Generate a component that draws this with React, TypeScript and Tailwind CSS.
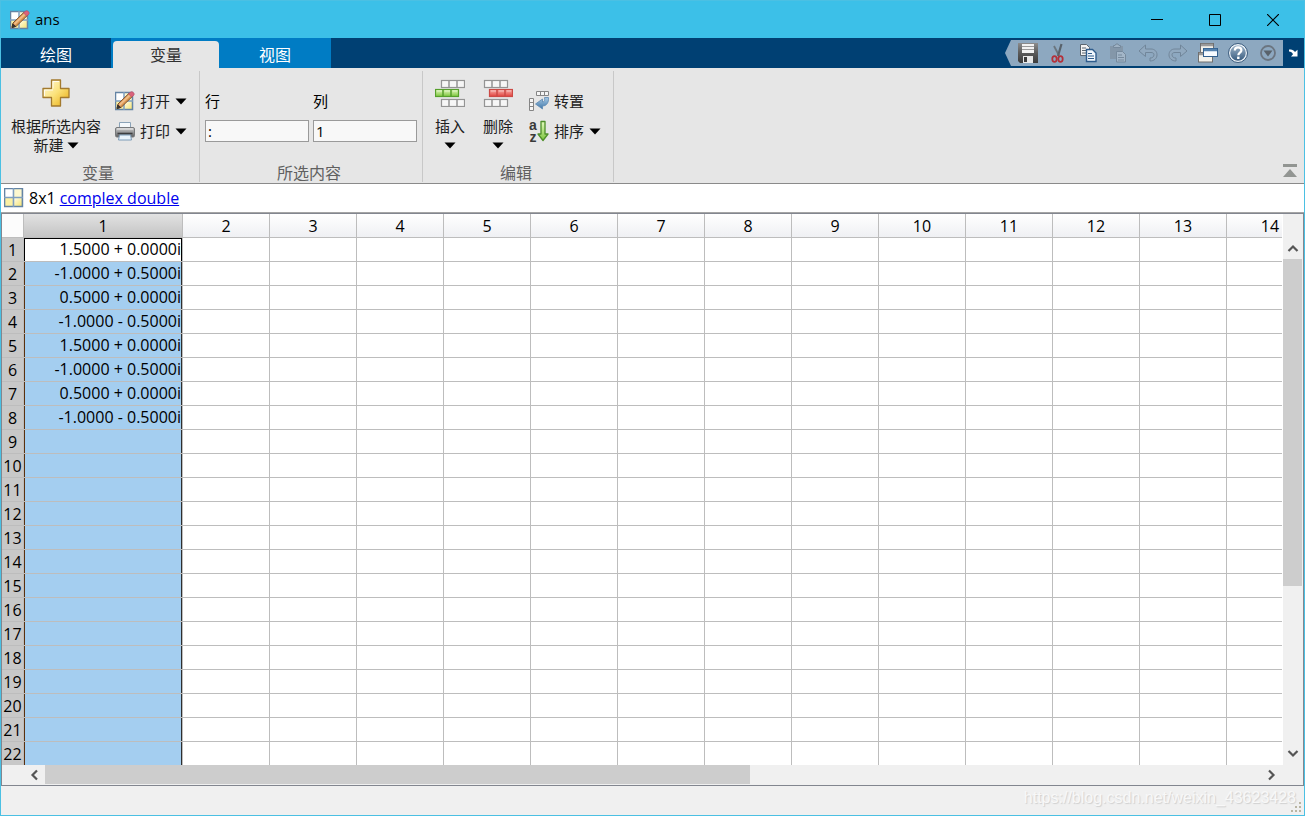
import { ReactNode } from 'react'

const COLUMNS = Array.from({ length: 14 }, (_, i) => i + 1)
const ROWS = Array.from({ length: 22 }, (_, i) => i + 1)

const VALUES = [
  '1.5000 + 0.0000i',
  '-1.0000 + 0.5000i',
  '0.5000 + 0.0000i',
  '-1.0000 - 0.5000i',
  '1.5000 + 0.0000i',
  '-1.0000 + 0.5000i',
  '0.5000 + 0.0000i',
  '-1.0000 - 0.5000i',
]

/* Gradients shared by all icons */
function IconDefs() {
  return (
    <svg width="0" height="0" className="absolute" aria-hidden="true">
      <defs>
        <linearGradient id="gold" x1="0" y1="0" x2="1" y2="1">
          <stop offset="0" stopColor="#fffbe0" />
          <stop offset="0.5" stopColor="#fbe27a" />
          <stop offset="1" stopColor="#e8a90c" />
        </linearGradient>
        <linearGradient id="cell" x1="0" y1="0" x2="1" y2="1">
          <stop offset="0" stopColor="#fffef0" />
          <stop offset="1" stopColor="#f5e063" />
        </linearGradient>
        <linearGradient id="steel" x1="0" y1="0" x2="0" y2="1">
          <stop offset="0" stopColor="#d0d0d0" />
          <stop offset="1" stopColor="#5c5e60" />
        </linearGradient>
        <linearGradient id="disk" x1="0" y1="0" x2="0" y2="1">
          <stop offset="0" stopColor="#8c8c8c" />
          <stop offset="0.5" stopColor="#5a5a5a" />
          <stop offset="1" stopColor="#3c3c3c" />
        </linearGradient>
        <linearGradient id="green" x1="0" y1="0" x2="0" y2="1">
          <stop offset="0" stopColor="#e4fac0" />
          <stop offset="1" stopColor="#7cc43c" />
        </linearGradient>
        <linearGradient id="red" x1="0" y1="0" x2="0" y2="1">
          <stop offset="0" stopColor="#f9b0aa" />
          <stop offset="1" stopColor="#e0423d" />
        </linearGradient>
        <linearGradient id="blue" x1="0" y1="0" x2="0" y2="1">
          <stop offset="0" stopColor="#a9cbe6" />
          <stop offset="1" stopColor="#3f76a8" />
        </linearGradient>
        <linearGradient id="help" x1="0" y1="0" x2="0" y2="1">
          <stop offset="0" stopColor="#a3b8cc" />
          <stop offset="1" stopColor="#34587c" />
        </linearGradient>
      </defs>
    </svg>
  )
}

function GridShape() {
  return (
    <>
      <rect x="1" y="1" width="18" height="18" fill="#fff" />
      <rect x="10" y="1" width="9" height="9" fill="#fdf8cf" />
      <rect x="1" y="10" width="9" height="9" fill="#fbf1a4" />
      <rect x="10" y="10" width="9" height="9" fill="url(#cell)" />
      <path d="M1.5 1.5h17v17h-17z" fill="none" stroke="#6484a4" strokeWidth="1.5" />
      <path d="M10 1v18M1 10h18" fill="none" stroke="#7f9fc0" strokeWidth="1.5" />
    </>
  )
}

function GridIcon() {
  return (
    <svg width="20" height="20" viewBox="1 1 19 19">
      <GridShape />
    </svg>
  )
}

function EditGridIcon() {
  return (
    <svg width="20" height="20" viewBox="1 0 20 20">
      <GridShape />
      <path d="M3 17.5l1-4.5L15 2.300l3.500 3L7.500 16z" fill="#dc9650" stroke="#7a4f2c" strokeWidth="1" />
      <path d="M5.500 14L16.500 3.500" stroke="#f0bd88" strokeWidth="1.800" />
      <path d="M3 17.500l.8-3.500 2.800 2.500z" fill="#3a322c" stroke="#3a322c" />
      <path d="M14.500 3l2-2c1.500-1 4.500 1 3.500 3l-2.200 2z" fill="#d9627c" stroke="#b34c66" strokeWidth=".6" />
    </svg>
  )
}

function PlusIcon() {
  return (
    <svg width="28" height="28" viewBox="0 0 28 28">
      <path d="M9.500 1h9v8.500H27v9h-8.500V27h-9v-8.500H1v-9h8.500z" fill="url(#gold)" stroke="#a37a2e" strokeWidth="1.300" strokeLinejoin="round" />
      <path d="M11 9.500V2.500h6M2.500 17v-6H11" fill="none" stroke="#fff" strokeOpacity=".8" />
    </svg>
  )
}

function PrintIcon() {
  return (
    <svg width="20" height="20" viewBox="0 0 20 20">
      <path d="M4.500 7V1.500h11V7" fill="#f4f8fb" stroke="#8ba3b8" />
      <rect x=".5" y="6.500" width="19" height="9.500" rx="1.500" fill="url(#steel)" stroke="#77797b" />
      <path d="M2 8h16" stroke="#ececec" />
      <path d="M2.500 12.500h15" stroke="#3c3e40" strokeWidth="1.500" />
      <path d="M4.500 14h11l1 5h-13z" fill="#e9f3fb" stroke="#7d9cb8" />
    </svg>
  )
}

function CellStrip({ x, y, fill, stroke }: { x: number; y: number; fill: string; stroke: string }) {
  return (
    <g>
      <rect x={x + 0.5} y={y + 0.5} width="23" height="7" fill={fill} stroke={stroke} strokeWidth="1.200" />
      <path d={`M${x + 8} ${y}v8M${x + 16} ${y}v8`} stroke={stroke} strokeWidth="1.500" />
      <path d={`M${x + 2} ${y + 2}h5M${x + 10} ${y + 2}h5M${x + 18} ${y + 2}h4`} stroke="#fff" strokeOpacity=".4" />
    </g>
  )
}

function InsertIcon() {
  return (
    <svg width="30" height="28" viewBox="0 0 30 28">
      <CellStrip x={6} y={1} fill="#f6f6f6" stroke="#949494" />
      <CellStrip x={0} y={10} fill="url(#green)" stroke="#56a02c" />
      <CellStrip x={6} y={20} fill="#f6f6f6" stroke="#949494" />
    </svg>
  )
}

function DeleteIcon() {
  return (
    <svg width="30" height="28" viewBox="0 0 30 28">
      <CellStrip x={1} y={1} fill="#f6f6f6" stroke="#949494" />
      <CellStrip x={6} y={10} fill="url(#red)" stroke="#cc4a45" />
      <CellStrip x={1} y={20} fill="#f6f6f6" stroke="#949494" />
    </svg>
  )
}

function TransposeIcon() {
  return (
    <svg width="20" height="20" viewBox="0 0 20 20">
      <path d="M7.500.5h12v4h-12zM11.500.5v4M15.500.5v4" fill="#f5f5f5" stroke="#858585" />
      <path d="M.5 7.500h4v12h-4zM.5 11.500h4M.5 15.500h4" fill="#f5f5f5" stroke="#858585" />
      <path d="M15.500 6.500h4c.5 5-2 8.500-6 8.500v3L6.500 13l7-5v3c2 0 2.500-2 2-4.500z" fill="url(#blue)" stroke="#5a88b2" strokeWidth=".8" />
    </svg>
  )
}

function SortIcon() {
  return (
    <span className="flex w-5 items-center justify-between">
      <span className="flex flex-col font-['Liberation_Sans',sans-serif] text-sm leading-3 font-bold text-[#3a3a3a]">
        <span>a</span>
        <span>z</span>
      </span>
      <svg width="12" height="22" viewBox="0 0 12 22">
        <path d="M4 1.500h4V14h3L6 20.500 1 14h3z" fill="url(#green)" stroke="#4e8f2a" strokeWidth="1.300" strokeLinejoin="round" />
      </svg>
    </span>
  )
}

function SaveIcon() {
  return (
    <svg width="20" height="20" viewBox="0 0 20 20">
      <path d="M0 0h20v20H2l-2-2z" fill="url(#disk)" />
      <rect x="4" y="1" width="12" height="9" fill="#f2f2f2" />
      <path d="M4 3.500h12M4 6.500h12" stroke="#9a9a9a" />
      <rect x="5" y="13" width="10" height="7" fill="#e8e8e8" />
      <rect x="6" y="14" width="3" height="5" fill="#3b3b3b" />
    </svg>
  )
}

function CutIcon() {
  return (
    <svg width="20" height="20" viewBox="0 0 20 20" fill="none">
      <path d="M6 3l5 9.500" stroke="#6b757e" strokeWidth="1.800" />
      <path d="M13.500 1L10 13" stroke="#59626b" strokeWidth="2.200" />
      <ellipse cx="6.500" cy="16" rx="2.200" ry="2.800" stroke="#b3303a" strokeWidth="1.800" />
      <ellipse cx="12.500" cy="16" rx="2.200" ry="2.800" stroke="#b3303a" strokeWidth="1.800" />
    </svg>
  )
}

function CopyIcon() {
  return (
    <svg width="20" height="20" viewBox="0 0 20 20">
      <path d="M2.500 1.500h6l3 3v8h-9z" fill="#f3f3f3" stroke="#5c6670" />
      <path d="M4 5h4M4 7.500h5M4 10h5" stroke="#5c6670" />
      <path d="M8.500 6.500h6l3.500 3.500v8.500H8.500z" fill="#f1f7fd" stroke="#2f5c8c" strokeWidth="1.400" />
      <path d="M10 10.500h4M10 13h6M10 15.500h6" stroke="#2f5c8c" />
    </svg>
  )
}

function PasteIcon() {
  return (
    <svg width="20" height="20" viewBox="0 0 20 20">
      <path d="M2 3h13v13H2z" fill="#8497a9" />
      <path d="M5.500 4.500v-2h1.500l1-1.500h2l1 1.500h1.500v2z" fill="#9fb2c4" stroke="#75899c" />
      <path d="M8.500 8.500h6l3 3v7.500h-9z" fill="#a3b6c8" stroke="#75899c" />
      <path d="M10 12h4M10 14.500h6M10 17h6" stroke="#75899c" />
    </svg>
  )
}

function UndoIcon({ flip = false }: { flip?: boolean }) {
  return (
    <svg width="20" height="20" viewBox="0 0 20 20">
      <path
        d="M1 8l6.500-6v4H13c3.500 0 6 2.300 6 5.800 0 3.700-3 6.200-7 6.200v-3c2.200 0 4-1 4-3.200C16 10.200 14.800 9.500 13 9.500H7.500v4z"
        fill="#91a9bf"
        stroke="#71869a"
        strokeLinejoin="round"
        transform={flip ? 'matrix(-1 0 0 1 20 0)' : undefined}
      />
    </svg>
  )
}

function WindowsIcon() {
  return (
    <svg width="20" height="20" viewBox="0 0 20 20">
      <rect x="2.500" y=".5" width="13" height="9" fill="#f3f1ea" stroke="#6f6f6f" />
      <path d="M3 2h12" stroke="#9a9a9a" strokeWidth="2.500" />
      <rect x=".5" y="9.500" width="14" height="9.500" fill="#f3f1ea" stroke="#6f6f6f" />
      <path d="M1 11h13" stroke="#9a9a9a" strokeWidth="2.500" />
      <rect x="5.500" y="5.500" width="14" height="8" fill="#f7fbff" stroke="#33608e" />
      <path d="M6 7h13" stroke="#5482ae" strokeWidth="2.500" />
    </svg>
  )
}

function HelpIcon() {
  return (
    <svg width="20" height="20" viewBox="0 0 20 20">
      <circle cx="10" cy="10" r="8.500" fill="url(#help)" stroke="#eef3f8" strokeWidth="1.500" />
      <circle cx="10" cy="10" r="9.500" fill="none" stroke="#3f5f80" />
      <path d="M6.800 7.500c0-2 1.300-3.200 3.300-3.200s3.300 1.100 3.300 2.900c0 2.300-3.100 2.500-3.100 5" fill="none" stroke="#fff" strokeWidth="2.200" />
      <rect x="9.100" y="13.600" width="2.400" height="2.400" fill="#fff" />
    </svg>
  )
}

function MenuIcon() {
  return (
    <svg width="20" height="20" viewBox="0 0 20 20">
      <circle cx="10" cy="10" r="7" fill="none" stroke="#6b7580" strokeWidth="1.800" />
      <path d="M5.500 7.500h9l-4.500 6z" fill="#59626b" />
    </svg>
  )
}

function Caret() {
  return (
    <svg width="12" height="7" viewBox="0 0 12 7" className="shrink-0">
      <path d="M.5.500h11L6 6.500z" fill="#000" />
    </svg>
  )
}

function Chevron({ d }: { d: string }) {
  return (
    <svg width="12" height="12" viewBox="0 0 12 12" fill="none" stroke="#555" strokeWidth="2.200">
      <path d={d} />
    </svg>
  )
}

function Group({ title, className, children }: { title: string; className: string; children: ReactNode }) {
  return (
    <section className={`mt-[3px] mb-px flex flex-col border-r border-[#c8c8c8] ${className}`}>
      <div className="flex flex-1 items-start">{children}</div>
      <h2 className="h-[18px] pr-1 text-center text-base leading-[18px] text-[#606060]">{title}</h2>
    </section>
  )
}

function BigButton({ icon, children }: { icon: ReactNode; children: ReactNode }) {
  return (
    <button className="flex flex-col items-center gap-[10px] pt-2 leading-[19px]">
      {icon}
      <span className="flex flex-col items-center">{children}</span>
    </button>
  )
}

function SmallButton({ icon, label, children }: { icon: ReactNode; label: string; children?: ReactNode }) {
  return (
    <button className="flex h-[30px] items-center gap-[5px]">
      {icon}
      <span>{label}</span>
      {children}
    </button>
  )
}

const quickActions = [
  { label: '保存', icon: <SaveIcon /> },
  { label: '剪切', icon: <CutIcon /> },
  { label: '复制', icon: <CopyIcon /> },
  { label: '粘贴', icon: <PasteIcon /> },
  { label: '撤消', icon: <UndoIcon /> },
  { label: '重做', icon: <UndoIcon flip /> },
  { label: '切换窗口', icon: <WindowsIcon /> },
  { label: '帮助', icon: <HelpIcon /> },
  { label: '更多', icon: <MenuIcon /> },
]

function TitleBar() {
  return (
    <header className="flex h-[37px] shrink-0 items-center bg-[#3cc0e8] pr-0.5 pl-[9px]">
      <EditGridIcon />
      <h1 className="ml-[5px] text-[15px] text-black">ans</h1>
      <div className="ml-auto flex h-full">
        <button aria-label="最小化" className="flex w-[58px] items-center justify-center">
          <svg width="12" height="12" stroke="#000"><path d="M0 5.500h12" /></svg>
        </button>
        <button aria-label="最大化" className="flex w-[58px] items-center justify-center">
          <svg width="12" height="12" stroke="#000" fill="none"><path d="M.5.500h11v11H.5z" /></svg>
        </button>
        <button aria-label="关闭" className="flex w-[58px] items-center justify-center">
          <svg width="12" height="12" stroke="#000" strokeWidth="1.200"><path d="M0 0l12 12M12 0L0 12" /></svg>
        </button>
      </div>
    </header>
  )
}

function TabBar() {
  return (
    <nav className="flex h-[30px] shrink-0 bg-[#004073] text-base leading-6 text-white">
      <button className="w-[110px] pt-1">绘图</button>
      <div className="flex bg-[#007cc4] pl-0.5">
        <button className="mt-[3px] w-[106px] rounded-t-sm bg-[#e6e6e6] pt-px text-[#303030]">变量</button>
        <button className="w-[112px] pt-1">视图</button>
      </div>
      <div className="ml-auto flex items-center">
        <svg width="6" height="26" viewBox="0 0 6 26"><path d="M6 0v26L0 13z" fill="#8da8c0" /></svg>
        <div className="flex h-[26px] bg-[#8da8c0] pl-0.5">
          {quickActions.map((item) => (
            <button key={item.label} aria-label={item.label} className="flex w-[30px] items-center justify-center">
              {item.icon}
            </button>
          ))}
        </div>
        <button aria-label="停靠" className="flex w-[21px] justify-center">
          <svg width="10" height="8" viewBox="0 0 10 8">
            <path d="M0 0.500c3 0 4.500.5 6 2.500L8.500.800V7.500H2L4 5.200C3.200 3.500 2 2.500 0 2.500z" fill="#fff" />
          </svg>
        </button>
      </div>
    </nav>
  )
}

function Ribbon() {
  return (
    <div className="flex h-[116px] shrink-0 border-b border-[#8a8a8a] bg-[#e6e6e6] text-[15px] text-[#202020]">
      <Group title="变量" className="w-[199px]">
        <div className="pl-[10px]">
          <BigButton icon={<PlusIcon />}>
            <span>根据所选内容</span>
            <span className="flex items-center gap-[3px]">新建<Caret /></span>
          </BigButton>
        </div>
        <div className="ml-[14px] pt-[15px]">
          <SmallButton icon={<EditGridIcon />} label="打开"><Caret /></SmallButton>
          <SmallButton icon={<PrintIcon />} label="打印"><Caret /></SmallButton>
        </div>
      </Group>
      <Group title="所选内容" className="w-[223px]">
        <div className="flex gap-1 pt-5 pl-[5px] text-black">
          <div className="flex flex-col gap-[9px]">
            <label htmlFor="row" className="leading-5">行</label>
            <input id="row" defaultValue=":" className="h-[22px] w-[104px] border border-[#9a9a9a] bg-[#f8f8f8] px-0.5" />
          </div>
          <div className="flex flex-col gap-[9px]">
            <label htmlFor="col" className="leading-5">列</label>
            <input id="col" defaultValue="1" className="h-[22px] w-[104px] border border-[#9a9a9a] bg-[#f8f8f8] px-0.5" />
          </div>
        </div>
      </Group>
      <Group title="编辑" className="w-[191px]">
        <div className="flex gap-[18px] pl-3">
          <BigButton icon={<InsertIcon />}>
            <span>插入</span>
            <span className="flex h-[19px] items-center"><Caret /></span>
          </BigButton>
          <BigButton icon={<DeleteIcon />}>
            <span>删除</span>
            <span className="flex h-[19px] items-center"><Caret /></span>
          </BigButton>
        </div>
        <div className="ml-4 pt-[15px]">
          <SmallButton icon={<TransposeIcon />} label="转置" />
          <SmallButton icon={<SortIcon />} label="排序"><Caret /></SmallButton>
        </div>
      </Group>
      <button aria-label="折叠" className="mr-[7px] mb-[5px] ml-auto self-end">
        <svg width="14" height="14" viewBox="0 0 14 14" fill="#929592">
          <path d="M0 0h14v3H0zM7 5l7 8H0z" />
        </svg>
      </button>
    </div>
  )
}

function DataGrid() {
  return (
    <div className="min-w-0 flex-1 overflow-hidden border-r border-white bg-white">
      <table className="w-[1312px] table-fixed border-separate border-spacing-0 text-base leading-[23px] text-black">
        <colgroup>
          <col className="w-[22px]" />
          <col className="w-[159px]" />
          {COLUMNS.slice(1).map((n) => <col key={n} className="w-[87px]" />)}
        </colgroup>
        <thead>
          <tr className="h-6">
            <td className="border-r border-b border-[#bdbdbd] bg-[#fcfcfc] p-0" />
            {COLUMNS.map((n) => (
              <th
                key={n}
                scope="col"
                className={`border-r border-b border-[#bdbdbd] bg-linear-to-b p-0 pt-0.5 leading-[21px] font-normal ${n === 1 ? 'from-[#e2e2e2] to-[#c4c4c4]' : 'from-white to-[#eff0f3]'}`}
              >
                {n}
              </th>
            ))}
          </tr>
        </thead>
        <tbody>
          {ROWS.map((r) => (
            <tr key={r} className="h-6">
              <th scope="row" className="border-r border-b border-[#bdbdbd] bg-[#c8c8c8] p-0 pt-0.5 leading-[21px] font-normal">{r}</th>
              {COLUMNS.map((c) => {
                if (c > 1) return <td key={c} className="border-r border-b border-[#bdbdbd] p-0" />
                return (
                  <td
                    key={c}
                    className={`border-r border-b border-[#bdbdbd] p-0 pr-px text-right ${r === 1 ? 'bg-white shadow-[inset_1px_1px_0_#000,inset_-1px_0_0_#000]' : 'bg-[#a4cef0] shadow-[inset_1px_0_0_#5b310f,inset_-1px_0_0_#2f2f2f]'}`}
                  >
                    {VALUES[r - 1]}
                  </td>
                )
              })}
            </tr>
          ))}
        </tbody>
      </table>
    </div>
  )
}

export default function App() {
  return (
    <div className="flex h-screen flex-col overflow-hidden border border-[#4bc0e3] bg-[#f0f0f0] font-['Open_Sans','Noto_Sans_CJK_SC',sans-serif]">
      <IconDefs />
      <TitleBar />
      <TabBar />
      <Ribbon />

      <div className="flex h-[29px] shrink-0 items-center border-b border-[#a5a5a5] bg-white pl-[3px] text-base text-black">
        <GridIcon />
        <span className="ml-[5px]">8x1</span>
        <a href="#" className="ml-1 text-[#0000ee] underline">complex double</a>
      </div>

      <main className="flex min-h-0 flex-1 flex-col border border-[#82868f]">
        <div className="flex min-h-0 flex-1">
          <DataGrid />
          {/* Vertical scroll bar */}
          <div className="flex w-5 shrink-0 flex-col pt-6 pr-px">
            <button aria-label="向上" className="flex h-[21px] items-center justify-center">
              <Chevron d="M1.500 8L6 3.500 10.500 8" />
            </button>
            <div className="min-h-0 flex-1">
              <div className="h-[68%] bg-[#cdcdcd]" />
            </div>
            <button aria-label="向下" className="flex h-[25px] items-center justify-center">
              <Chevron d="M1.500 4L6 8.500 10.500 4" />
            </button>
          </div>
        </div>
        {/* Horizontal scroll bar */}
        <div className="flex h-5 shrink-0 pr-[22px] pl-[22px]">
          <button aria-label="向左" className="flex w-[21px] items-center justify-center">
            <Chevron d="M8 1.500L3.500 6 8 10.500" />
          </button>
          <div className="min-w-0 flex-1">
            <div className="h-[19px] w-[58%] bg-[#cdcdcd]" />
          </div>
          <button aria-label="向右" className="flex w-[21px] items-center justify-center">
            <Chevron d="M4 1.500L8.500 6 4 10.500" />
          </button>
        </div>
      </main>

      <footer className="relative flex h-[29px] shrink-0 items-start justify-end pr-2 font-['Liberation_Sans',sans-serif] text-base leading-6 text-[#f8f8f8]">
        <span className="[text-shadow:1px_1px_1px_#cfcfcf]">https://blog.csdn.net/weixin_43623428</span>
        <svg width="11" height="11" viewBox="0 0 11 11" fill="#b9b5a3" className="absolute right-0.5 bottom-0.5">
          <path d="M8 0h2v2H8zM4 4h2v2H4zM8 4h2v2H8zM0 8h2v2H0zM4 8h2v2H4zM8 8h2v2H8z" />
        </svg>
      </footer>
    </div>
  )
}
